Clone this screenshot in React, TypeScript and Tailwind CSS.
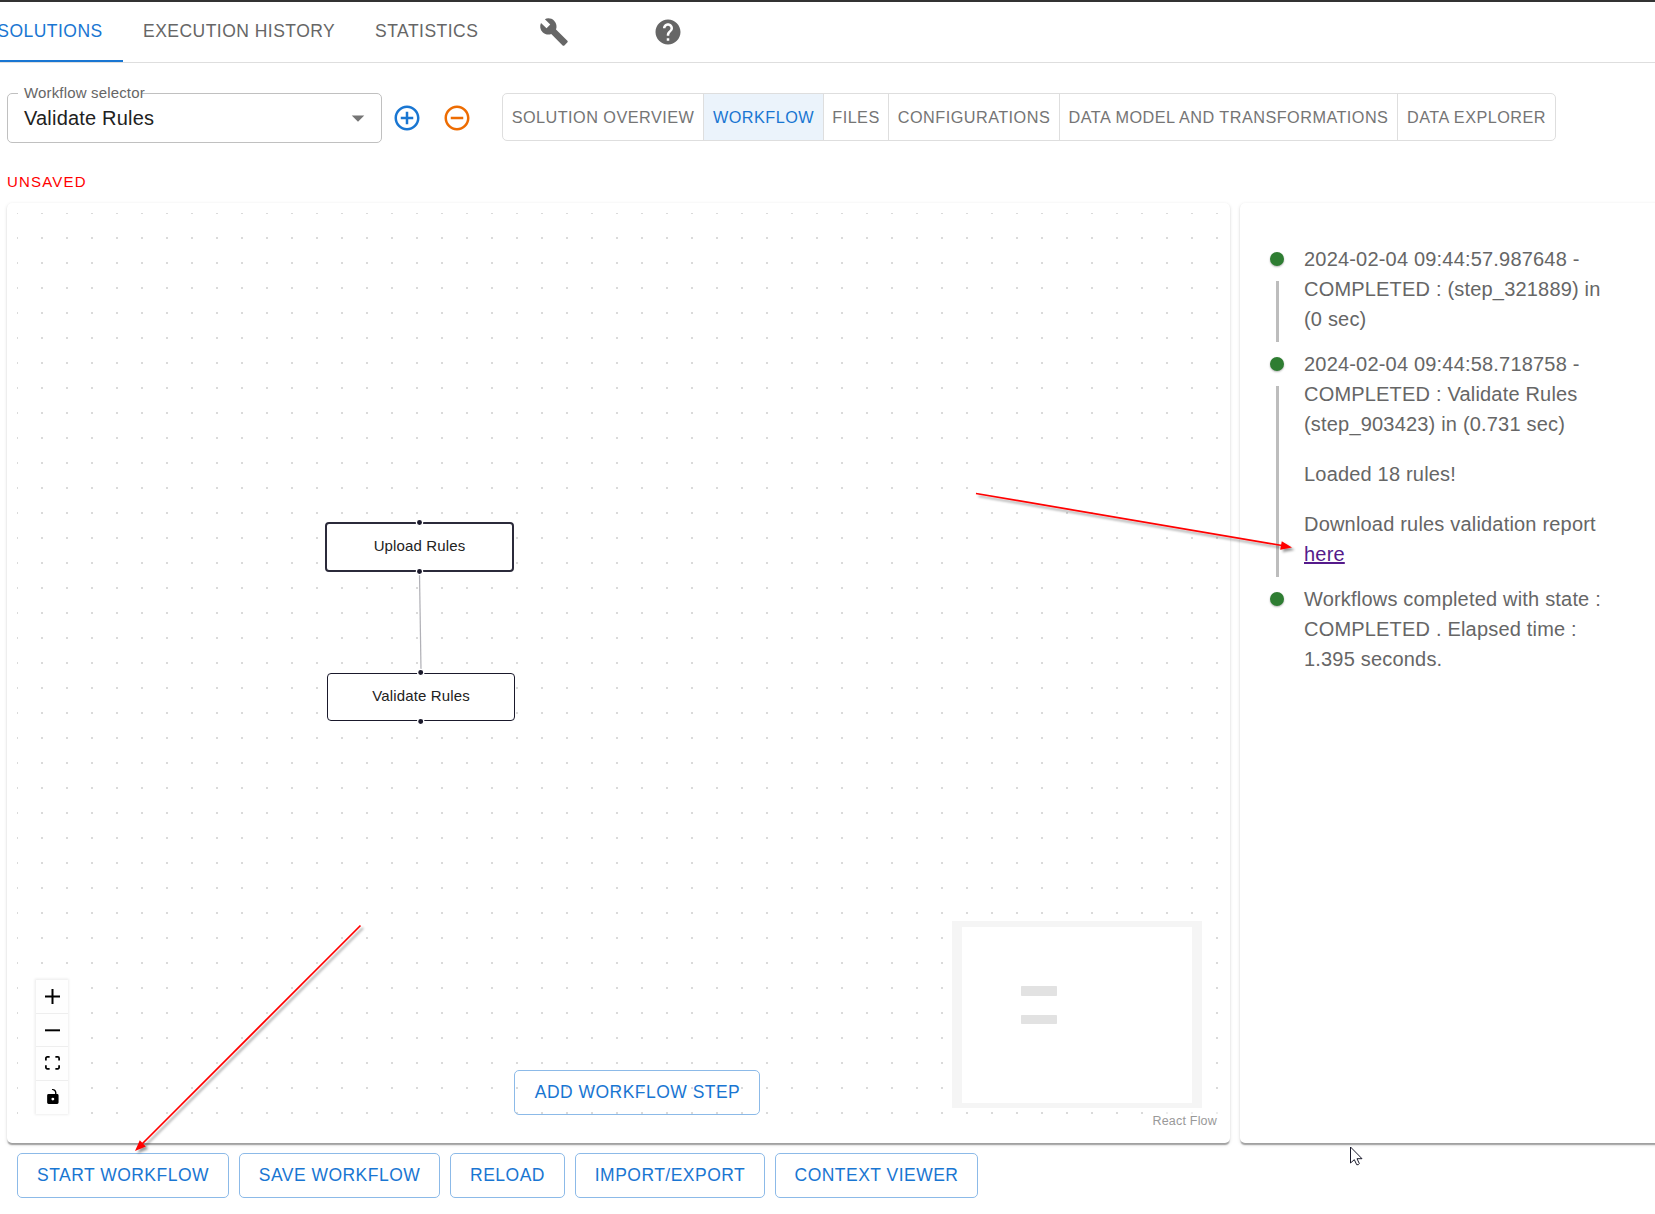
import type { ReactNode } from 'react';

const BUILD_ICON =
  'm22.7 19-9.1-9.1c.9-2.3.4-5-1.5-6.9-2-2-5-2.4-7.4-1.3L9 6 6 9 1.6 4.7C.4 7.1.9 10.1 2.9 12.1c1.9 1.9 4.6 2.4 6.9 1.5l9.1 9.1c.4.4 1 .4 1.4 0l2.3-2.3c.5-.4.5-1.1.1-1.4z';
const HELP_ICON =
  'M12 2C6.48 2 2 6.48 2 12s4.48 10 10 10 10-4.48 10-10S17.52 2 12 2zm1 17h-2v-2h2v2zm2.07-7.75-.9.92C13.45 12.9 13 13.5 13 15h-2v-.5c0-1.1.45-2.1 1.17-2.83l1.24-1.26c.37-.36.59-.86.59-1.41 0-1.1-.9-2-2-2s-2 .9-2 2H8c0-2.21 1.79-4 4-4s4 1.79 4 4c0 .88-.36 1.68-.93 2.25z';
const ADD_ICON =
  'M13 7h-2v4H7v2h4v4h2v-4h4v-2h-4V7zm-1-5C6.48 2 2 6.48 2 12s4.48 10 10 10 10-4.48 10-10S17.52 2 12 2zm0 18c-4.41 0-8-3.59-8-8s3.59-8 8-8 8 3.59 8 8-3.59 8-8 8z';
const REMOVE_ICON =
  'M7 11v2h10v-2H7zm5-9C6.48 2 2 6.48 2 12s4.48 10 10 10 10-4.48 10-10S17.52 2 12 2zm0 18c-4.41 0-8-3.59-8-8s3.59-8 8-8 8 3.59 8 8-3.59 8-8 8z';

const PAPER =
  'bg-white rounded-[5px] shadow-[0px_2.5px_1.25px_-1.25px_rgba(0,0,0,0.2),0px_1.25px_1.25px_0px_rgba(0,0,0,0.14),0px_1.25px_3.75px_0px_rgba(0,0,0,0.12)]';

function Icon({ d, className }: { d: string; className?: string }) {
  return (
    <svg viewBox="0 0 24 24" width="30" height="30" fill="currentColor" className={className}>
      <path d={d} />
    </svg>
  );
}

function Header() {
  return (
    <header className="flex h-[63px] shrink-0 border-t-2 border-b border-t-[#333333] border-b-[#dedede] text-[17.5px] tracking-[0.48px] text-[#666666]">
      <div className="-ml-[23px] flex h-[60px] w-[146px] items-center justify-center border-b-2 border-[#1976d2] pt-px text-[#1976d2]">
        SOLUTIONS
      </div>
      <div className="flex h-[58px] w-[232px] items-center pl-5">EXECUTION HISTORY</div>
      <div className="flex h-[58px] w-[143px] items-center pl-5">STATISTICS</div>
      <div className="flex h-[60px] w-[112px] items-center justify-center">
        <Icon d={BUILD_ICON} />
      </div>
      <div className="flex h-[60px] w-[115px] items-center justify-center">
        <Icon d={HELP_ICON} />
      </div>
    </header>
  );
}

function Toolbar() {
  const cell = 'flex items-center justify-center border-l border-[#dedede] first:border-l-0';
  return (
    <div className="mt-[30px] flex h-[50px] pl-[7px]">
      <div className="relative flex w-[375px] items-center justify-between rounded-[5px] border border-[#c0c0c0] pr-2 pl-[16px]">
        <span className="absolute -top-[11px] left-[10px] flex h-5 w-[124px] items-center bg-white pl-[6px] text-[15px] tracking-[0.16px] whitespace-nowrap text-[#666666]">
          Workflow selector
        </span>
        <span className="text-[20px] tracking-[0.19px] text-[#212121]">Validate Rules</span>
        <Icon d="m7 10 5 5 5-5z" className="text-[#757575]" />
      </div>
      <div className="flex items-center gap-5 pl-[10px]">
        <Icon d={ADD_ICON} className="text-[#1976d2]" />
        <Icon d={REMOVE_ICON} className="text-[#ed6c02]" />
      </div>
      <div className="ml-[30px] flex h-[48px] overflow-hidden rounded-[5px] border border-[#dedede] text-[16.25px] tracking-[0.46px] text-[#757575]">
        <div className={`${cell} w-[200px]`}>SOLUTION OVERVIEW</div>
        <div className={`${cell} w-[120px] bg-[#ebf3fb] text-[#1976d2]`}>WORKFLOW</div>
        <div className={`${cell} w-[65px]`}>FILES</div>
        <div className={`${cell} w-[171px]`}>CONFIGURATIONS</div>
        <div className={`${cell} w-[338px]`}>DATA MODEL AND TRANSFORMATIONS</div>
        <div className={`${cell} w-[158px]`}>DATA EXPLORER</div>
      </div>
    </div>
  );
}

function OutlinedButton({ children, width }: { children: ReactNode; width: string }) {
  return (
    <button
      className={`flex h-[45px] items-center justify-center rounded-[5px] border border-[#8cbae8] text-[17.5px] tracking-[0.48px] whitespace-nowrap text-[#1976d2] ${width}`}
    >
      {children}
    </button>
  );
}

function FlowCanvas() {
  return (
    <section className={`relative h-[940px] w-[1223px] shrink-0 ${PAPER}`}>
      <svg className="absolute top-0 left-0" width="1223" height="940">
        <defs>
          <pattern id="dots" x="9" y="9" width="25" height="25" patternUnits="userSpaceOnUse">
            <rect width="2" height="2" fill="#dadada" />
          </pattern>
        </defs>
        <rect x="10" y="10" width="1203" height="921" fill="url(#dots)" />
        <line x1="412.5" y1="371" x2="414" y2="467" stroke="#b1b1b7" strokeWidth="1.25" />
      </svg>

      <div className="absolute top-[319px] left-[318px] flex h-[50px] w-[189px] items-center justify-center rounded-[4px] border-2 border-[#2b2a3a] bg-white pb-[2px] text-[15px] tracking-[0.14px] text-[#222222]">
        Upload Rules
      </div>
      <div className="absolute top-[470px] left-[320px] flex h-[48px] w-[188px] items-center justify-center rounded-[4px] border border-[#1a192b] bg-white pb-[2px] text-[15px] tracking-[0.14px] text-[#222222]">
        Validate Rules
      </div>
      <svg className="absolute top-0 left-0" width="1223" height="940" fill="#1a192b" stroke="#fff" strokeWidth="1.25">
        <circle cx="412.5" cy="319.5" r="3.1" />
        <circle cx="412.5" cy="368.5" r="3.1" />
        <circle cx="413.7" cy="469.5" r="3.1" />
        <circle cx="413.7" cy="518.5" r="3.1" />
      </svg>

      <div className="absolute top-[777px] left-[29px] flex w-[32px] flex-col bg-[#fefefe] shadow-[0_0_2.5px_1.25px_rgba(0,0,0,0.08)]">
        <div className="flex h-[34px] items-center justify-center border-b border-[#eeeeee]">
          <svg width="15" height="15" viewBox="0 0 32 32">
            <path d="M32 18.133H18.133V32h-4.266V18.133H0v-4.266h13.867V0h4.266v13.867H32z" />
          </svg>
        </div>
        <div className="flex h-[33px] items-center justify-center border-b border-[#eeeeee]">
          <svg width="15" height="3" viewBox="0 0 32 5">
            <path d="M0 0h32v4.2H0z" />
          </svg>
        </div>
        <div className="flex h-[34px] items-center justify-center border-b border-[#eeeeee] pb-px">
          <svg width="15" height="14" viewBox="0 0 32 30">
            <path d="M3.692 4.63c0-.53.4-.938.939-.938h5.215V0H4.708C2.13 0 0 2.054 0 4.63v5.216h3.692V4.631zM27.354 0h-5.2v3.692h5.17c.53 0 .984.4.984.939v5.215H32V4.631A4.624 4.624 0 0027.354 0zm.954 24.83c0 .532-.4.94-.939.94h-5.215v3.768h5.215c2.577 0 4.631-2.13 4.631-4.707v-5.139h-3.692v5.139zm-23.677.94c-.531 0-.939-.4-.939-.94v-5.138H0v5.139c0 2.577 2.13 4.707 4.708 4.707h5.138V25.77H4.631z" />
          </svg>
        </div>
        <div className="flex h-[33px] items-center justify-center pb-[2px] pl-px">
          <svg width="12" height="15" viewBox="0 0 25 32">
            <path d="M21.333 10.667H19.81V7.619C19.81 3.429 16.38 0 12.19 0c-4.114 1.828-1.37 2.133.305 2.438 1.676.305 4.42 2.59 4.42 5.181v3.048H3.047A3.056 3.056 0 000 13.714v15.238A3.056 3.056 0 003.048 32h18.285a3.056 3.056 0 003.048-3.048V13.714a3.056 3.056 0 00-3.048-3.047zM12.19 24.533a3.056 3.056 0 01-3.047-3.047 3.056 3.056 0 013.047-3.048 3.056 3.056 0 013.048 3.048 3.056 3.056 0 01-3.048 3.047z" />
          </svg>
        </div>
      </div>

      <div className="absolute top-[867px] left-[507px]">
        <OutlinedButton width="w-[246px] h-[44px] pl-px pb-px">ADD WORKFLOW STEP</OutlinedButton>
      </div>

      <svg className="absolute top-[718px] left-[945px]" width="250" height="187">
        <rect width="250" height="187" fill="#f5f5f5" />
        <rect x="10" y="6" width="230" height="176" fill="#ffffff" />
        <rect x="69" y="65" width="36" height="10" rx="0.8" fill="#e2e2e2" />
        <rect x="69" y="94" width="36" height="9" rx="0.8" fill="#e2e2e2" />
      </svg>
      <span className="absolute right-[10px] bottom-[12px] bg-white/50 px-[3px] text-[12.5px] leading-[19px] tracking-[0.2px] text-[#999999]">
        React Flow
      </span>
    </section>
  );
}

function LogEntry({ children, last }: { children: ReactNode; last?: boolean }) {
  return (
    <li className="flex gap-[19.500px]">
      <div className="flex w-[15px] flex-col items-center">
        <span className="mt-[8px] h-[14px] w-[14px] shrink-0 rounded-full bg-[#2e7d32] shadow-[0_1px_2px_rgba(0,0,0,0.3)]" />
        {!last && <span className="mt-[15px] mb-[7px] w-[3px] grow bg-[#bdbdbd]" />}
      </div>
      <div className="flex w-[306px] flex-col gap-5 pb-[15px]">{children}</div>
    </li>
  );
}

function LogPanel() {
  return (
    <section className={`h-[940px] w-[430px] shrink-0 pt-[41px] pl-[29.500px] ${PAPER}`}>
      <ul className="text-[20px] leading-[30px] tracking-[0.19px] text-[#666666]">
        <LogEntry>
          <p>
            2024-02-04 09:44:57.987648 -<br />
            COMPLETED : (step_321889) in
            <br />
            (0 sec)
          </p>
        </LogEntry>
        <LogEntry>
          <p>
            2024-02-04 09:44:58.718758 -<br />
            COMPLETED : Validate Rules
            <br />
            (step_903423) in (0.731 sec)
          </p>
          <p>Loaded 18 rules!</p>
          <p>
            Download rules validation report
            <br />
            <a className="text-[#551a8b] underline">here</a>
          </p>
        </LogEntry>
        <LogEntry last>
          <p>
            Workflows completed with state :<br />
            COMPLETED . Elapsed time :<br />
            1.395 seconds.
          </p>
        </LogEntry>
      </ul>
    </section>
  );
}

function Annotations() {
  return (
    <svg className="pointer-events-none absolute top-0 left-0" width="1655" height="1214">
      <defs>
        <filter id="soft" x="-5%" y="-20%" width="110%" height="140%">
          <feDropShadow dx="2.5" dy="2.500" stdDeviation="1.3" floodColor="#000" floodOpacity="0.4" />
        </filter>
      </defs>
      <g fill="#ff0000" stroke="#ff0000" filter="url(#soft)">
        <path d="M976 493.5 1282 545.5" strokeWidth="1.7" />
        <path d="M1292 547.5 1280.2 549.800 1281.8 541.2z" stroke="none" />
        <path d="M360.500 925.500 142 1144" strokeWidth="1.7" />
        <path d="M135 1151 139.800 1140.300 145.800 1146.500z" stroke="none" />
      </g>
      <path
        d="M1350.500 1147v16l3.800-3.300 2.400 5q1.800.6 2.600-1.200l-2.300-4.800h5z"
        fill="#fff"
        stroke="#1a1a2b"
        strokeWidth="1"
      />
    </svg>
  );
}

export default function App() {
  return (
    <div className="relative flex h-[1214px] w-[1655px] flex-col overflow-hidden bg-white font-['Liberation_Sans',Arial,sans-serif]">
      <Header />
      <Toolbar />
      <div className="mt-[28px] mb-[10px] pl-[7px] text-[15px] leading-[22px] tracking-[1.2px] text-[#ff0000]">UNSAVED</div>
      <main className="flex gap-[10px] pl-[7px]">
        <FlowCanvas />
        <LogPanel />
      </main>
      <footer className="mt-[10px] flex gap-[10px] pl-[17px]">
        <OutlinedButton width="w-[212px] pb-px">START WORKFLOW</OutlinedButton>
        <OutlinedButton width="w-[201px] pb-px">SAVE WORKFLOW</OutlinedButton>
        <OutlinedButton width="w-[115px] pb-px">RELOAD</OutlinedButton>
        <OutlinedButton width="w-[190px] pb-px">IMPORT/EXPORT</OutlinedButton>
        <OutlinedButton width="w-[203px] pb-px">CONTEXT VIEWER</OutlinedButton>
      </footer>
      <Annotations />
    </div>
  );
}
